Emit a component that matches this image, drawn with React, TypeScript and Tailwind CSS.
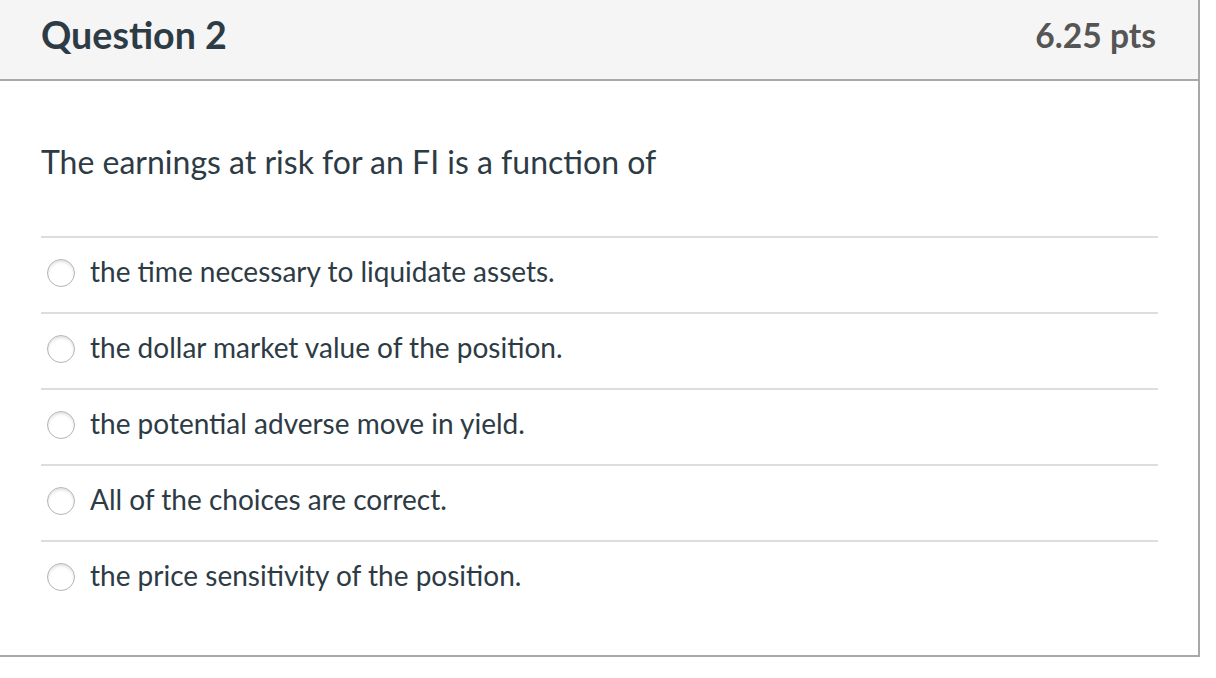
import React from "react";

const options = [
  "the time necessary to liquidate assets.",
  "the dollar market value of the position.",
  "the potential adverse move in yield.",
  "All of the choices are correct.",
  "the price sensitivity of the position.",
];

export default function App() {
  return (
    <div className="w-[1216px] h-[678px] bg-white" style={{ fontFamily: "Lato, 'Noto Sans', sans-serif" }}>
      <div className="w-[1200px] border-r-2 border-b-2 border-[#a8a8a8]">
        <div className="h-[81px] bg-[#f5f5f5] border-b-2 border-[#a8a8a8] flex items-center justify-between pl-[41px] pr-[42px]">
          <div className="text-[37.6px] font-bold text-[#2d3b45] leading-none pb-[10px]">Question 2</div>
          <div className="text-[33.6px] font-bold text-[#555555] leading-none pb-[8px]">6.25 pts</div>
        </div>
        <div className="pl-[41px] pr-[40px] h-[574px]">
          <div className="pt-[65px] text-[32px] text-[#2d3b45] leading-none">The earnings at risk for an FI is a function of</div>
          <div className="mt-[58px]">
            {options.map((o) => (
              <div key={o} className="h-[76px] border-t-2 border-[#dddddd] flex items-center pb-[8px]">
                <div className="ml-[6px] mt-[4px] w-[28px] h-[28px] rounded-full border border-[#b5b5b5] bg-white shadow-[inset_0_2px_3px_rgba(0,0,0,0.12)]" />
                <div className="ml-[15px] text-[28px] text-[#2d3b45] leading-none">{o}</div>
              </div>
            ))}
          </div>
        </div>
      </div>
    </div>
  );
}
